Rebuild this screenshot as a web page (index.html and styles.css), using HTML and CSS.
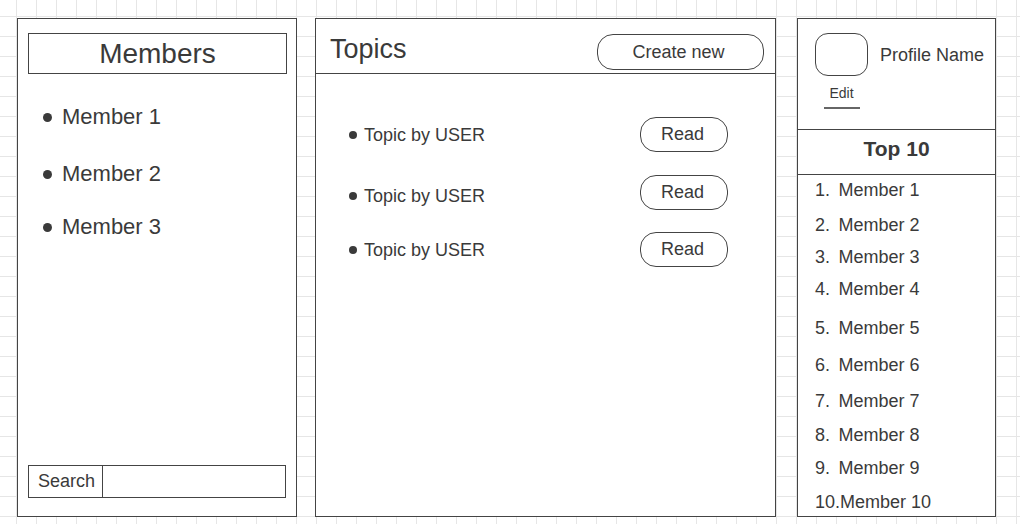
FILE: index.html
```html
<!DOCTYPE html>
<html lang="en">
<head>
<meta charset="utf-8">
<title>Forum</title>
<link rel="stylesheet" href="styles.css">
</head>
<body>
<div class="board">
  <section class="panel members">
    <h2 class="members-title">Members</h2>
    <ul class="member-list">
      <li>Member 1</li>
      <li>Member 2</li>
      <li>Member 3</li>
    </ul>
    <div class="search">
      <span class="search-label">Search</span>
      <span class="search-input"></span>
    </div>
  </section>

  <section class="panel topics">
    <header class="topics-head">
      <h2 class="topics-title">Topics</h2>
      <button class="pill create">Create new</button>
    </header>
    <ul class="topic-list">
      <li class="topic"><span class="topic-text">Topic by USER</span><button class="pill read">Read</button></li>
      <li class="topic topic-low"><span class="topic-text">Topic by USER</span><button class="pill read">Read</button></li>
      <li class="topic"><span class="topic-text">Topic by USER</span><button class="pill read">Read</button></li>
    </ul>
  </section>

  <section class="panel side">
    <div class="profile">
      <div class="avatar"></div>
      <span class="profile-name">Profile Name</span>
      <a class="edit">Edit</a>
    </div>
    <h3 class="top-title">Top 10</h3>
    <ol class="top-list">
      <li><span class="num">1.</span>Member 1</li>
      <li><span class="num">2.</span>Member 2</li>
      <li><span class="num">3.</span>Member 3</li>
      <li><span class="num">4.</span>Member 4</li>
      <li><span class="num">5.</span>Member 5</li>
      <li><span class="num">6.</span>Member 6</li>
      <li><span class="num">7.</span>Member 7</li>
      <li><span class="num">8.</span>Member 8</li>
      <li><span class="num">9.</span>Member 9</li>
      <li><span class="num">10.</span>Member 10</li>
    </ol>
  </section>
</div>
</body>
</html>
```
FILE: styles.css
```css
* { box-sizing: border-box; }

html, body {
  margin: 0;
  padding: 0;
  height: 524px;
  overflow: hidden;
}

body {
  font-family: "Liberation Sans", Arial, sans-serif;
  color: #3a3a3a;
  background-color: #fff;
  background-image:
    linear-gradient(#e6e6e6 1px, transparent 1px),
    linear-gradient(90deg, #e6e6e6 1px, transparent 1px);
  background-size: 20px 20px;
  background-position: 16px 16px;
}

.board {
  display: flex;
  padding: 18px 0 0 17px;
}

.panel {
  height: 499px;
  border: 1px solid #444;
  background: #fff;
  display: flex;
  flex-direction: column;
}

/* ---------- Members ---------- */
.members { width: 280px; }

.members-title {
  margin: 14px 9px 0 10px;
  height: 41px;
  border: 1px solid #444;
  font-size: 28px;
  font-weight: normal;
  line-height: 40px;
  text-align: center;
}

.member-list {
  list-style: none;
  margin: 30px 0 0 0;
  padding: 0 0 0 25px;
  display: flex;
  flex-direction: column;
  gap: 30px;
}

.member-list li {
  display: flex;
  align-items: center;
  gap: 10px;
  font-size: 22px;
  line-height: 26px;
}

.member-list li:nth-child(2) { margin-top: 1px; }
.member-list li:nth-child(3) { margin-top: -3px; }

.member-list li::before {
  content: "";
  width: 9px;
  height: 9px;
  border-radius: 50%;
  background: #3a3a3a;
}

.search {
  margin: auto 10px 18px 10px;
  height: 33px;
  border: 1px solid #444;
  display: flex;
}

.search-label {
  width: 74px;
  border-right: 1px solid #444;
  padding-left: 9px;
  font-size: 18px;
  line-height: 30px;
}

.search-input { flex: 1; }

/* ---------- Topics ---------- */
.topics {
  width: 461px;
  margin-left: 18px;
}

.topics-head {
  height: 55px;
  border-bottom: 1px solid #444;
  display: flex;
  justify-content: space-between;
  align-items: flex-start;
  padding: 0 11px 0 14px;
}

.topics-title {
  margin: 14px 0 0 0;
  font-size: 27px;
  font-weight: normal;
  line-height: 32px;
}

.pill {
  font-family: inherit;
  color: #3a3a3a;
  background: #fff;
  border: 1px solid #444;
  border-radius: 16px;
  font-size: 18px;
  padding: 0;
  cursor: pointer;
}

.create {
  margin-top: 15px;
  width: 167px;
  height: 36px;
  padding-right: 4px;
}

.topic-list {
  list-style: none;
  margin: 0;
  padding: 43px 47px 0 33px;
  display: flex;
  flex-direction: column;
  gap: 22.5px;
}

.topic {
  display: flex;
  align-items: center;
  justify-content: space-between;
}

.topic-text {
  display: flex;
  align-items: center;
  gap: 7px;
  font-size: 18px;
  line-height: 20px;
}

.topic-low .topic-text { margin-top: 8px; }

.topic-text::before {
  content: "";
  width: 8px;
  height: 8px;
  border-radius: 50%;
  background: #3a3a3a;
}

.read {
  width: 88px;
  height: 35px;
  padding-right: 3px;
}

/* ---------- Side ---------- */
.side {
  width: 199px;
  margin-left: 21px;
}

.profile {
  height: 111px;
  border-bottom: 1px solid #444;
  padding: 14px 0 0 17px;
  display: grid;
  grid-template-columns: 53px auto;
  grid-template-rows: 43px auto;
  column-gap: 12px;
  align-content: start;
}

.avatar {
  width: 53px;
  height: 43px;
  border: 1px solid #444;
  border-radius: 13px;
}

.profile-name {
  align-self: center;
  font-size: 18px;
  line-height: 20px;
}

.edit {
  grid-column: 1;
  justify-self: center;
  width: 36px;
  margin-top: 9px;
  padding-bottom: 6px;
  border-bottom: 2px solid #666;
  font-size: 14px;
  line-height: 16px;
  text-align: center;
  color: #3a3a3a;
}

.top-title {
  margin: 0;
  height: 45px;
  border-bottom: 1px solid #444;
  padding-top: 7px;
  font-size: 21px;
  font-weight: bold;
  line-height: 24px;
  text-align: center;
}

.top-list {
  list-style: none;
  margin: 0;
  padding: 5px 0 0 17px;
  font-size: 18px;
  line-height: 20px;
}

.top-list .num {
  display: inline-block;
  min-width: 23.5px;
}

.top-list li:nth-child(2) { margin-top: 15px; }
.top-list li:nth-child(3) { margin-top: 12px; }
.top-list li:nth-child(4) { margin-top: 12px; }
.top-list li:nth-child(5) { margin-top: 19px; }
.top-list li:nth-child(6) { margin-top: 17px; }
.top-list li:nth-child(7) { margin-top: 16px; }
.top-list li:nth-child(8) { margin-top: 14px; }
.top-list li:nth-child(9) { margin-top: 13px; }
.top-list li:nth-child(10) { margin-top: 14px; }
```
